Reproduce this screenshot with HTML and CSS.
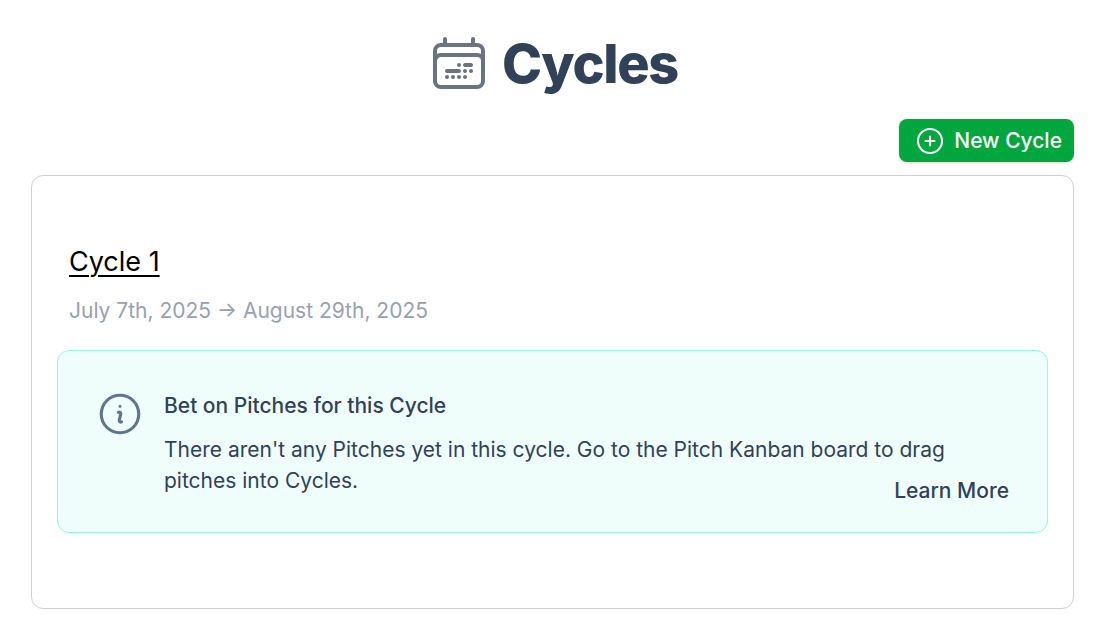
FILE: index.html
```html
<!DOCTYPE html>
<html lang="en">
<head>
    <meta charset="UTF-8">
    <meta name="viewport" content="width=device-width, initial-scale=1">
    <title>Cycles</title>
    <link rel="stylesheet" href="styles.css">
</head>
<body>

    <header class="page-header">
        <svg class="page-icon" viewBox="0 0 24 24" aria-hidden="true">
            <path d="M6.75 2.994v2.25m10.5-2.25v2.25m-14.252 13.5V7.491a2.25 2.25 0 0 1 2.25-2.25h13.5a2.25 2.25 0 0 1 2.25 2.25v11.251m-18 0a2.25 2.25 0 0 0 2.25 2.25h13.5a2.25 2.25 0 0 0 2.25-2.25m-18 0v-7.5a2.25 2.25 0 0 1 2.25-2.25h13.5a2.25 2.25 0 0 1 2.25 2.25v7.5m-6.75-6h2.25m-9 2.25h4.5m.002-2.25h.005v.006H12v-.006Zm-.001 4.5h.006v.006h-.006v-.005Zm-2.25.001h.005v.006H9.75v-.006Zm-2.25 0h.005v.005h-.006v-.005Zm6.75-2.247h.005v.005h-.005v-.005Zm0 2.247h.006v.006h-.006v-.006Zm2.25-2.248h.006V15H16.5v-.005Z"/>
        </svg>
        <h1>Cycles</h1>
    </header>

    <main>
        <div class="toolbar">
            <button type="button" class="new-button">
                <svg viewBox="0 0 26 26" aria-hidden="true">
                    <circle cx="13" cy="13" r="12"/>
                    <path d="M13 8.5v9M8.5 13h9"/>
                </svg>
                New Cycle
            </button>
        </div>

        <section class="cycle-card">
            <div class="cycle-heading">
                <h2><a href="#cycle-1">Cycle 1</a></h2>
                <p class="cycle-dates">July 7th, 2025 → August 29th, 2025</p>
            </div>

            <div class="notice">
                <svg class="notice-icon" viewBox="0 0 24 24" aria-hidden="true">
                    <path d="m11.25 11.25.041-.02a.75.75 0 0 1 1.063.852l-.708 2.836a.75.75 0 0 0 1.063.853l.041-.021M21 12a9 9 0 1 1-18 0 9 9 0 0 1 18 0Zm-9-3.75h.008v.008H12V8.25Z"/>
                </svg>
                <div class="notice-body">
                    <h3>Bet on Pitches for this Cycle</h3>
                    <p>There aren't any Pitches yet in this cycle. Go to the Pitch Kanban board to drag pitches into Cycles.</p>
                </div>
                <a class="learn-more" href="#learn-more">Learn More</a>
            </div>
        </section>
    </main>

</body>
</html>
```
FILE: styles.css
```css
* {
    box-sizing: border-box;
}

body {
    margin: 0;
    background: #ffffff;
    color: #314158;
    font-family: Inter, "Liberation Sans", sans-serif;
    font-size: 21px;
    line-height: 31px;
}

h1, h2, h3, p {
    margin: 0;
}

svg {
    flex: none;
    fill: none;
    stroke: currentColor;
    stroke-width: 1.5;
    stroke-linecap: round;
    stroke-linejoin: round;
}

.page-header {
    display: flex;
    justify-content: center;
    align-items: center;
    gap: 11px;
    padding: 30px 26px 23px 31px;
}

.page-header h1 {
    padding-top: 2px;
    font-size: 54px;
    line-height: 64px;
    font-weight: 800;
    letter-spacing: -0.025em;
}

.page-icon {
    width: 64px;
    height: 64px;
    color: #6b7280;
}

main {
    padding: 0 26px 23px 31px;
}

.toolbar {
    display: flex;
    justify-content: flex-end;
    margin-bottom: 13px;
}

.new-button {
    display: flex;
    align-items: center;
    gap: 11px;
    padding: 6px 12px 6px 18px;
    border: none;
    border-radius: 8px;
    background: #00a63e;
    box-shadow: 0 1px 3px rgba(0, 0, 0, 0.15);
    color: #ffffff;
    font: inherit;
    font-weight: 500;
    cursor: pointer;
}

.new-button svg {
    width: 26px;
    height: 26px;
    stroke-width: 2;
}

.cycle-card {
    padding: 66px 25px 75px;
    border: 1px solid #cfcfcf;
    border-radius: 12px;
}

.cycle-heading {
    padding: 0 12px;
    margin-bottom: 24px;
}

.cycle-heading h2 {
    margin-bottom: 14px;
    font-size: 27px;
    line-height: 39px;
    font-weight: 400;
}

.cycle-heading a {
    color: #000000;
    text-decoration-thickness: 2px;
    text-underline-offset: 4px;
}

.cycle-dates {
    color: #99a1af;
}

.notice {
    display: grid;
    grid-template-columns: 50px 1fr;
    column-gap: 19px;
    padding: 38px 38px 26px 37px;
    border: 1px solid #96f7e4;
    border-radius: 12px;
    background: #effefb;
}

.notice-icon {
    width: 50px;
    height: 50px;
    color: #62748e;
}

/* the text and the link share one cell, the link sits in its bottom corner */
.notice-body,
.learn-more {
    grid-area: 1 / 2;
}

.notice-body {
    padding: 1px 0 10px;
}

.notice h3 {
    margin-bottom: 13px;
    font-size: 21px;
    font-weight: 500;
}

.learn-more {
    align-self: end;
    justify-self: end;
    color: inherit;
    font-weight: 500;
    text-decoration: none;
}
```
